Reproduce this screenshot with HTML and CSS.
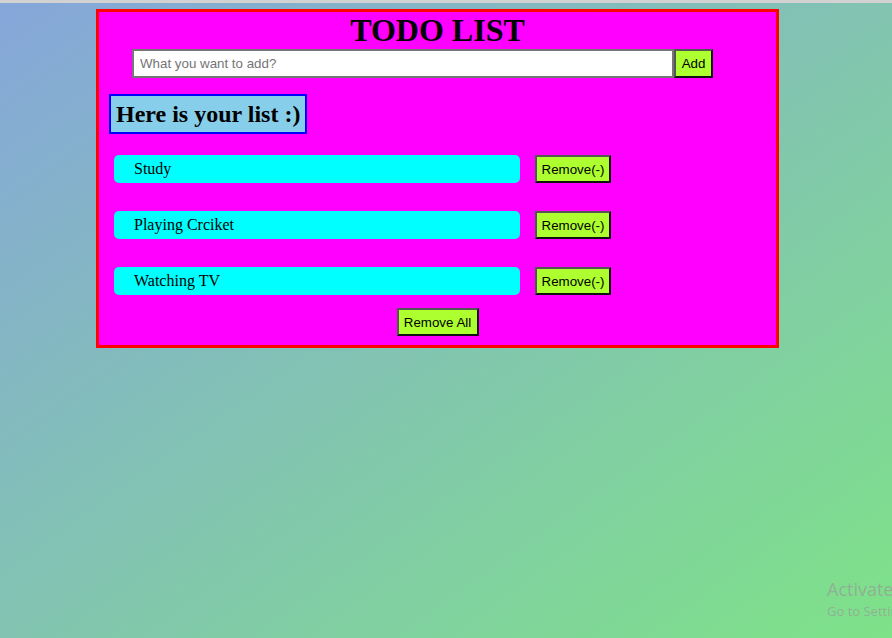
FILE: index.html
```html
<!DOCTYPE html>
<html>
<head>
<meta charset="utf-8">
<title>TODO LIST</title>
<link rel="stylesheet" href="styles.css">
</head>
<body>
<div class="topline"></div>
<div class="container">
  <h1 class="title">TODO LIST</h1>
  <div class="add-row">
    <input class="task-input" type="text" placeholder="What you want to add?">
    <button class="btn btn-add">Add</button>
  </div>
  <h2 class="list-heading">Here is your list :)</h2>
  <ul class="list">
    <li class="item"><span class="item-text">Study</span><button class="btn btn-remove">Remove(-)</button></li>
    <li class="item"><span class="item-text">Playing Crciket</span><button class="btn btn-remove">Remove(-)</button></li>
    <li class="item"><span class="item-text">Watching TV</span><button class="btn btn-remove">Remove(-)</button></li>
  </ul>
  <div class="footer-row">
    <button class="btn btn-remove-all">Remove All</button>
  </div>
</div>
<div class="watermark">
  <div class="wm-title">Activate Windows</div>
  <div class="wm-sub">Go to Settings to activate Windows.</div>
</div>
</body>
</html>
```
FILE: styles.css
```css
html, body {
  margin: 0;
  padding: 0;
}
body {
  width: 892px;
  height: 638px;
  overflow: hidden;
  position: relative;
  background: linear-gradient(to bottom right, #86a6da, #7ee288);
  font-family: "Liberation Serif", "Times New Roman", serif;
}
.topline {
  height: 3px;
  background: #d2d2d2;
}
.container {
  margin: 6px 0 0 96px;
  width: 677px;
  height: 333px;
  border: 3px solid #ff0000;
  background: #ff00ff;
  box-sizing: content-box;
}
.title {
  margin: 0;
  text-align: center;
  font-size: 32px;
  line-height: 37px;
  font-weight: bold;
  color: #000;
}
.add-row {
  display: flex;
  padding-left: 33px;
}
.task-input {
  width: 542px;
  height: 29px;
  box-sizing: border-box;
  border: 2px inset #767676;
  border-style: solid;
  border-color: #767676;
  padding: 1px 6px;
  font-family: "Liberation Sans", Arial, sans-serif;
  font-size: 13.33px;
  background: #fff;
  outline: none;
}
.task-input::placeholder {
  color: #757575;
}
.btn {
  font-family: "Liberation Sans", Arial, sans-serif;
  font-size: 13.33px;
  color: #000;
  background: #adff2f;
  border: 2px outset #000;
  border-color: #555 #111 #111 #555;
  border-style: solid;
  padding: 1px 5px;
  height: 28px;
  box-sizing: border-box;
  cursor: pointer;
}
.btn-add {
  height: 29px;
  width: 39px;
  padding: 1px 0;
}
.list-heading {
  display: inline-block;
  margin: 16px 0 0 10px;
  padding: 4px 5px;
  border: 2px solid #0000ff;
  background: #87ceeb;
  font-size: 24px;
  line-height: 28px;
  font-weight: bold;
}
.list {
  list-style: none;
  margin: 21px 0 0 15px;
  padding: 0;
  display: flex;
  flex-direction: column;
  gap: 28px;
}
.item {
  display: flex;
  align-items: center;
  gap: 15px;
}
.item-text {
  width: 406px;
  height: 28px;
  box-sizing: border-box;
  padding-left: 20px;
  background: #00ffff;
  border-radius: 5px;
  font-size: 16px;
  line-height: 28px;
}
.btn-remove {
  width: 76px;
  padding: 1px 0;
}
.footer-row {
  display: flex;
  justify-content: center;
  margin-top: 13px;
}
.btn-remove-all {
  width: 82px;
  padding: 1px 0;
}
.watermark {
  position: absolute;
  left: 827px;
  top: 577px;
  white-space: nowrap;
  font-family: "Open Sans", "Noto Sans", sans-serif;
  color: rgba(150, 160, 150, 0.75);
}
.wm-title {
  font-size: 18px;
  line-height: 24px;
}
.wm-sub {
  font-size: 13px;
  line-height: 20px;
}
```
